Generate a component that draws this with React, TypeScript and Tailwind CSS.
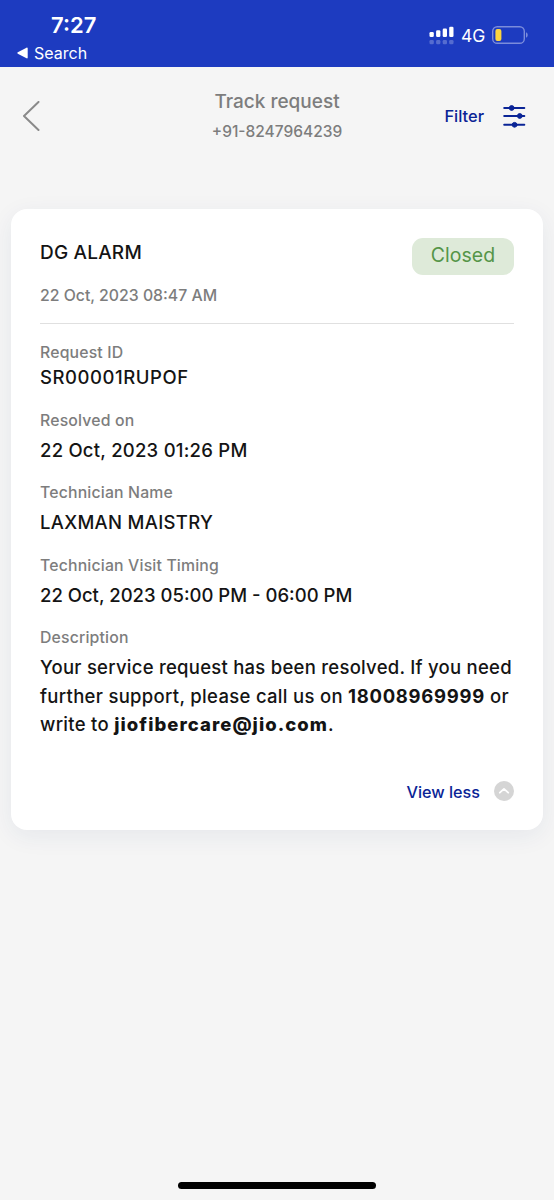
import React from 'react';

interface FieldProps {
  label: string;
  children: React.ReactNode;
  compact?: boolean;
}

const Field: React.FC<FieldProps> = ({ label, children, compact }) => (
  <div className={compact ? 'flex flex-col gap-px' : 'flex flex-col gap-[6px]'}>
    <dt className="h-[19px] text-[15.8px] leading-[19px] font-[450] tracking-[0.17px] text-[#7d7d7d]">{label}</dt>
    <dd className="text-[18.5px] leading-[28.5px] font-medium text-[#141414]">{children}</dd>
  </div>
);

/* Signal bars, network type and battery level */
const StatusIcons: React.FC = () => (
  <div className="flex items-center pt-[3px]">
    <svg width="26" height="20" viewBox="0 0 26 20" fill="#fff">
      <rect x="0.5" y="7" width="4.3" height="5" rx="1.3" />
      <rect x="7.1" y="5.2" width="4.3" height="6.8" rx="1.3" />
      <rect x="13.7" y="3.6" width="4.3" height="8.4" rx="1.3" />
      <rect x="20.2" y="1.7" width="4.3" height="10.3" rx="1.3" />
      <g fillOpacity="0.25">
        <rect x="0.5" y="15" width="4.3" height="4.2" rx="1.3" />
        <rect x="7.1" y="15" width="4.3" height="4.2" rx="1.3" />
        <rect x="13.7" y="15" width="4.3" height="4.2" rx="1.3" />
        <rect x="20.2" y="15" width="4.3" height="4.2" rx="1.3" />
      </g>
    </svg>
    <span className="mt-[2px] ml-[6px] w-[25px] text-[17.5px] leading-5 text-white">4G</span>
    <svg className="ml-[6px]" width="37" height="20" viewBox="0 0 37 20">
      <rect x="0.7" y="1.7" width="31.6" height="16.6" rx="4.6" fill="none" stroke="#7b8cdb" strokeWidth="1.4" />
      <rect x="3.4" y="4" width="6" height="12" rx="2" fill="#fcd53f" />
      <path d="M34 7.2c1 .4 1.7 1.5 1.7 2.8s-.7 2.4-1.7 2.8z" fill="#7b8cdb" />
    </svg>
  </div>
);

const FilterIcon: React.FC = () => (
  <svg width="24" height="24" viewBox="0 0 24 24" stroke="#0a2496" fill="#0a2496" strokeWidth="2" strokeLinecap="round">
    <path d="M2.2 4H22.3M2.2 12H22.3M2.2 20.8H22.3" />
    <circle cx="9.7" cy="4" r="2.4" strokeWidth="1" />
    <circle cx="17.8" cy="12" r="2.4" strokeWidth="1" />
    <circle cx="12.6" cy="20.8" r="2.4" strokeWidth="1" />
  </svg>
);

export default function App() {
  return (
    <div className="flex h-[1200px] w-[554px] flex-col overflow-hidden bg-[#f5f5f5] font-['Inter',sans-serif]">
      <div className="flex h-[67px] shrink-0 justify-between bg-[#1d3bc0] pr-[25px] pl-[17px] text-white">
        <div className="flex flex-col pt-[11px]">
          <span className="pl-[34px] text-[22px] leading-7 font-semibold">7:27</span>
          <div className="flex h-7 items-center gap-[6px]">
            <svg width="11" height="12" viewBox="0 0 11 12" fill="#fff">
              <path d="M10.7 1.3v9.4c0 .6-.6.9-1.2.6L.8 6.7c-.6-.3-.6-1.1 0-1.4L9.500.7c.6-.3 1.200 0 1.200.6z" />
            </svg>
            <span className="text-[16px] leading-5">Search</span>
          </div>
        </div>
        <StatusIcons />
      </div>

      <header className="grid h-[100px] shrink-0 grid-cols-[150px_1fr_150px] pr-[28px] pl-[22px]">
        <button className="flex h-[98px] items-center">
          <svg width="18" height="30" viewBox="0 0 18 30" fill="none" stroke="#8a8a8a" strokeWidth="2" strokeLinecap="round" strokeLinejoin="round">
            <path d="M16.5 1L2 15l14.5 14" />
          </svg>
        </button>
        <div className="flex flex-col items-center pt-[21px] pl-[6px] text-[#7d7d7d]">
          <h1 className="text-[19px] leading-7 font-medium">Track request</h1>
          <p className="mt-[2px] text-[15.5px] leading-7 font-[450]">+91-8247964239</p>
        </div>
        <button className="flex h-[98px] items-center justify-end gap-[18px]">
          <span className="text-[16.4px] font-medium text-[#0a2496]">Filter</span>
          <FilterIcon />
        </button>
      </header>

      <main className="mx-[11px] mt-[42px] flex h-[621px] shrink-0 flex-col rounded-2xl bg-white px-[29px] shadow-[0_6px_24px_rgba(30,50,110,0.07)]">
        <div className="flex justify-between border-b border-[#e0e0e0] pt-7 pb-[17px]">
          <div className="flex flex-col">
            <h2 className="mt-[2px] text-[19px] leading-7 font-medium tracking-[0.2px] text-[#141414]">DG ALARM</h2>
            <time className="mt-[15px] h-6 text-[15.8px] leading-7 font-[450] text-[#7d7d7d]">22 Oct, 2023 08:47 AM</time>
          </div>
          <span className="mt-[0.5px] flex h-[37px] w-[102px] items-center justify-center rounded-[11px] bg-[#deead9] text-[19.5px] text-[#559548]">
            Closed
          </span>
        </div>

        <dl className="flex flex-col gap-[19px] pt-[19px]">
          <Field label="Request ID" compact>
            <span className="tracking-[0.55px]">SR00001RUPOF</span>
          </Field>
          <Field label="Resolved on">
            <span className="tracking-[0.24px]">22 Oct, 2023 01:26 PM</span>
          </Field>
          <Field label="Technician Name">
            <span className="tracking-[0.3px]">LAXMAN MAISTRY</span>
          </Field>
          <Field label="Technician Visit Timing">22 Oct, 2023 05:00 PM - 06:00 PM</Field>
          <Field label="Description">
            <span className="block tracking-[0.25px] whitespace-nowrap">
              Your service request has been resolved. If you need
            </span>
            <span className="block tracking-[0.3px] whitespace-nowrap">
              further support, please call us on <b className="tracking-[0.7px]">18008969999</b> or
            </span>
            <span className="block tracking-[0.3px] whitespace-nowrap">
              write to <b className="font-extrabold tracking-[1.05px]">jiofibercare@jio.com</b>.
            </span>
          </Field>
        </dl>

        <button className="mt-auto mb-[28.5px] flex items-center justify-end gap-[14px]">
          <span className="mt-px text-[16.2px] leading-5 font-medium text-[#0a2496]">View less</span>
          <svg width="20" height="20" viewBox="0 0 20 20" fill="none">
            <circle cx="10" cy="10" r="10" fill="#d5d5d5" />
            <path d="M5.8 11.7L10 7.9l4.2 3.8" stroke="#fff" strokeWidth="1.8" strokeLinecap="round" strokeLinejoin="round" />
          </svg>
        </button>
      </main>

      <div className="mt-auto mb-[11.5px] h-[7px] w-[198px] self-center rounded-full bg-black" />
    </div>
  );
}
